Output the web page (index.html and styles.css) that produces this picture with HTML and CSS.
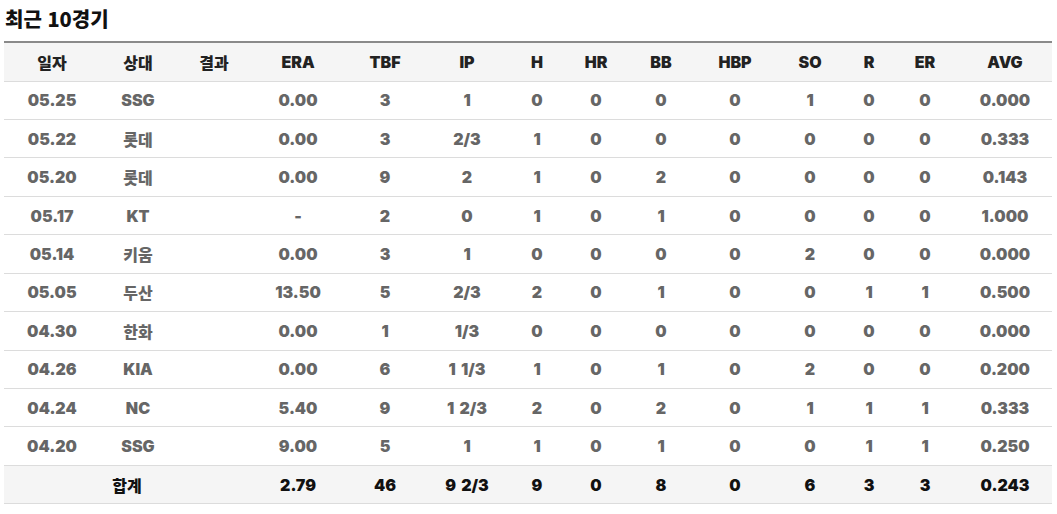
FILE: index.html
```html
<!DOCTYPE html>
<html lang="ko">
<head>
<meta charset="utf-8">
<link rel="stylesheet" href="styles.css">
</head>
<body>
<h2 class="title">최근 10경기</h2>
<table class="stats">
<colgroup>
<col class="c-date"><col class="c-opp"><col class="c-res"><col class="c-era"><col class="c-tbf"><col class="c-ip"><col class="c-h"><col class="c-hr"><col class="c-bb"><col class="c-hbp"><col class="c-so"><col class="c-r"><col class="c-er"><col class="c-avg">
</colgroup>
<thead>
<tr><th>일자</th><th>상대</th><th>결과</th><th>ERA</th><th>TBF</th><th>IP</th><th>H</th><th>HR</th><th>BB</th><th>HBP</th><th>SO</th><th>R</th><th>ER</th><th>AVG</th></tr>
</thead>
<tbody>
<tr><td>05.25</td><td>SSG</td><td></td><td>0.00</td><td>3</td><td>1</td><td>0</td><td>0</td><td>0</td><td>0</td><td>1</td><td>0</td><td>0</td><td>0.000</td></tr>
<tr><td>05.22</td><td>롯데</td><td></td><td>0.00</td><td>3</td><td>2/3</td><td>1</td><td>0</td><td>0</td><td>0</td><td>0</td><td>0</td><td>0</td><td>0.333</td></tr>
<tr><td>05.20</td><td>롯데</td><td></td><td>0.00</td><td>9</td><td>2</td><td>1</td><td>0</td><td>2</td><td>0</td><td>0</td><td>0</td><td>0</td><td>0.143</td></tr>
<tr><td>05.17</td><td>KT</td><td></td><td>-</td><td>2</td><td>0</td><td>1</td><td>0</td><td>1</td><td>0</td><td>0</td><td>0</td><td>0</td><td>1.000</td></tr>
<tr><td>05.14</td><td>키움</td><td></td><td>0.00</td><td>3</td><td>1</td><td>0</td><td>0</td><td>0</td><td>0</td><td>2</td><td>0</td><td>0</td><td>0.000</td></tr>
<tr><td>05.05</td><td>두산</td><td></td><td>13.50</td><td>5</td><td>2/3</td><td>2</td><td>0</td><td>1</td><td>0</td><td>0</td><td>1</td><td>1</td><td>0.500</td></tr>
<tr><td>04.30</td><td>한화</td><td></td><td>0.00</td><td>1</td><td>1/3</td><td>0</td><td>0</td><td>0</td><td>0</td><td>0</td><td>0</td><td>0</td><td>0.000</td></tr>
<tr><td>04.26</td><td>KIA</td><td></td><td>0.00</td><td>6</td><td>1 1/3</td><td>1</td><td>0</td><td>1</td><td>0</td><td>2</td><td>0</td><td>0</td><td>0.200</td></tr>
<tr><td>04.24</td><td>NC</td><td></td><td>5.40</td><td>9</td><td>1 2/3</td><td>2</td><td>0</td><td>2</td><td>0</td><td>1</td><td>1</td><td>1</td><td>0.333</td></tr>
<tr><td>04.20</td><td>SSG</td><td></td><td>9.00</td><td>5</td><td>1</td><td>1</td><td>0</td><td>1</td><td>0</td><td>0</td><td>1</td><td>1</td><td>0.250</td></tr>
</tbody>
<tfoot>
<tr><td colspan="2" class="sum-label">합계</td><td></td><td>2.79</td><td>46</td><td>9 2/3</td><td>9</td><td>0</td><td>8</td><td>0</td><td>6</td><td>3</td><td>3</td><td>0.243</td></tr>
</tfoot>
</table>
</body>
</html>
```

FILE: styles.css
```css
html, body {
  margin: 0;
  padding: 0;
  background: #fff;
}
body {
  padding: 5px 5px 0 4px;
  font-family: Inter, "Noto Sans CJK KR", sans-serif;
}
.title {
  margin: 0 0 8px 1px;
  font-size: 20px;
  line-height: 28px;
  color: #111;
  font-family: "Noto Sans CJK KR", sans-serif;
  font-weight: 900;
}
.stats {
  width: 1048px;
  border-collapse: collapse;
  table-layout: fixed;
  border-top: 2px solid #8a8a8a;
  font-size: 16px;
  font-weight: 900;
  text-align: center;
  word-spacing: 2px;
}
.c-date { width: 96px; }
.c-opp { width: 76px; }
.c-res { width: 76px; }
.c-era { width: 92px; }
.c-tbf { width: 82px; }
.c-ip { width: 82px; }
.c-h { width: 58px; }
.c-hr { width: 60px; }
.c-bb { width: 70px; }
.c-hbp { width: 78px; }
.c-so { width: 72px; }
.c-r { width: 46px; }
.c-er { width: 66px; }
.c-avg { width: 94px; }
.stats th {
  height: 37.5px;
  padding: 0;
  background: #f5f5f5;
  color: #222;
  border-bottom: 1px solid #dcdcdc;
  font-weight: 900;
}
.stats td {
  height: 37.45px;
  padding: 0;
  color: #666;
  border-bottom: 1px solid #dcdcdc;
}
.stats tfoot td {
  background: #f5f5f5;
  color: #111;
}
.stats tfoot .sum-label {
  padding-left: 74px;
}
```
